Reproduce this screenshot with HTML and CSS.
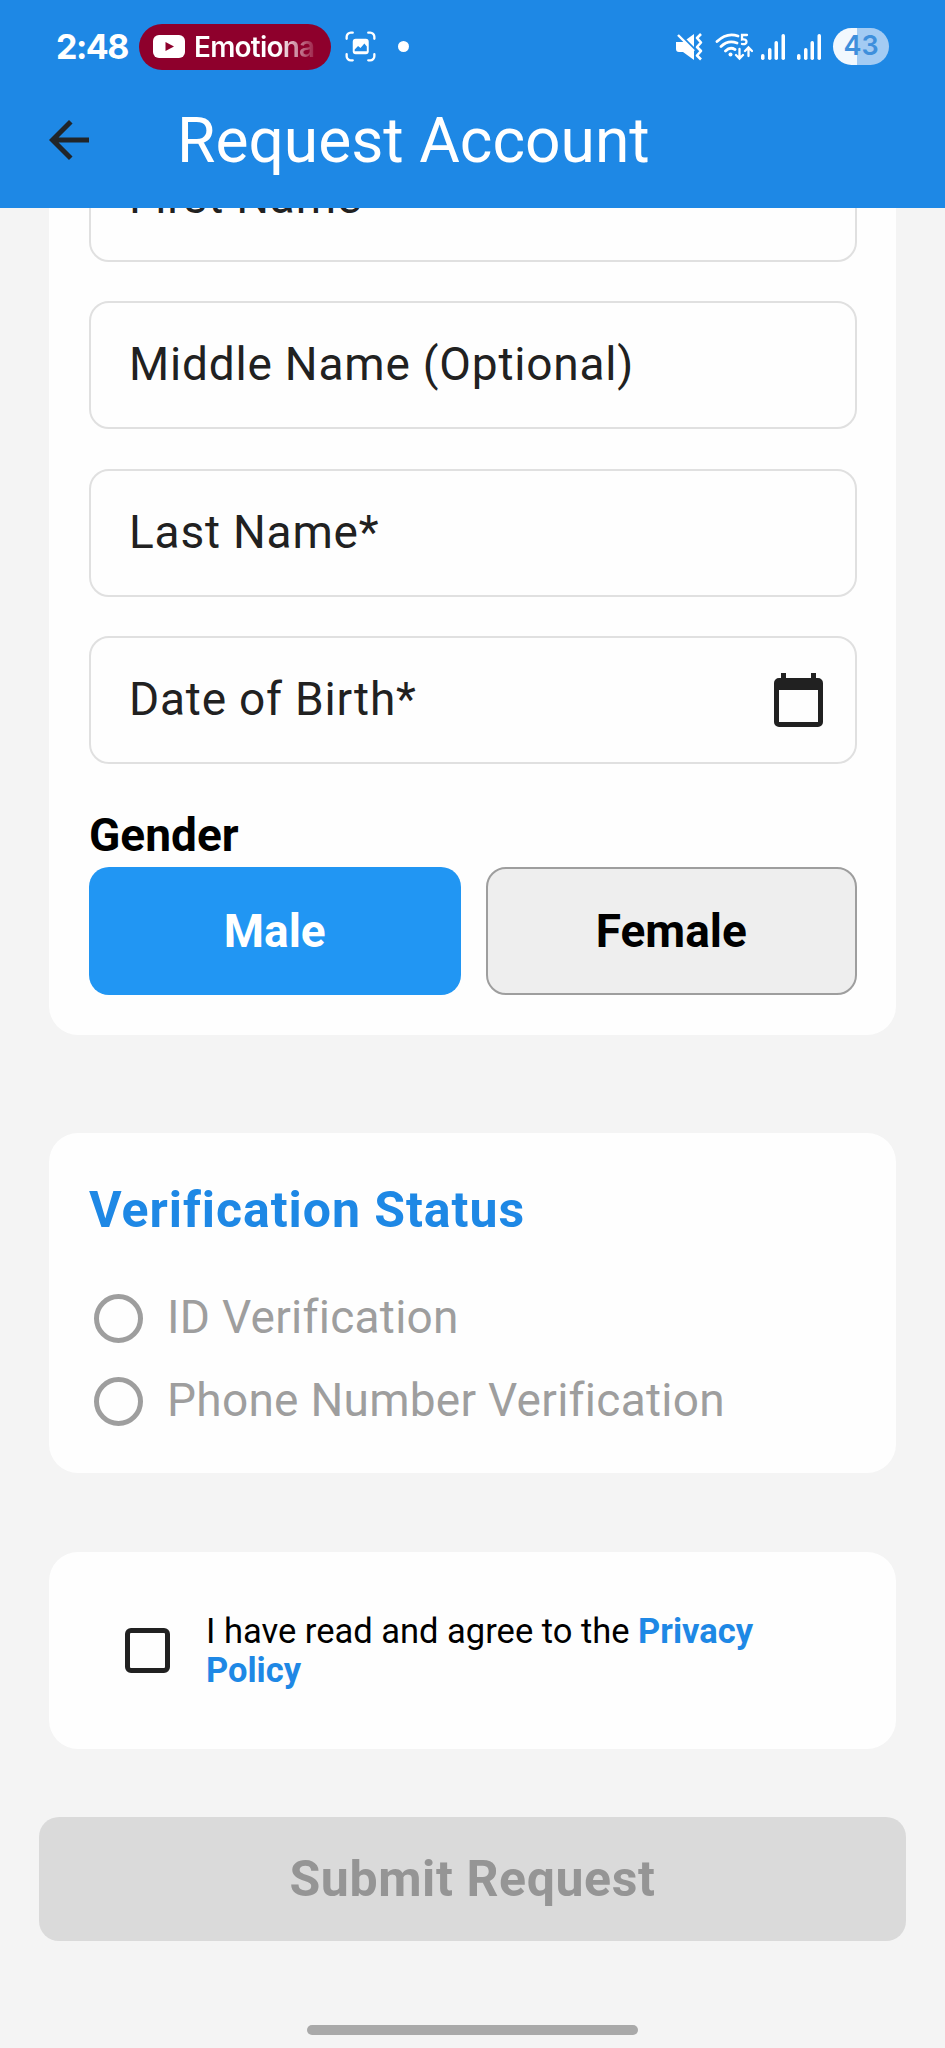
FILE: index.html
```html
<!DOCTYPE html>
<html lang="en">
<head>
<meta charset="utf-8">
<title>Request Account</title>
<link rel="stylesheet" href="styles.css">
</head>
<body>
<div class="screen">
  <header class="header">
    <div class="status">
      <span class="clock">2:48</span>
      <span class="pill">
        <svg class="play" viewBox="0 0 32 23"><rect width="32" height="23" rx="6" fill="#fff"/><path d="M12.500 7v9l8.500-4.500z" fill="#8e002c"/></svg>
        <span class="pill-text">Emotiona</span>
      </span>
      <svg class="shot" viewBox="0 0 32 32" fill="none" stroke="#fff" stroke-width="2.400" stroke-linecap="round"><path d="M1.700 8V6a4.300 4.300 0 0 1 4.300-4.300h2M24 1.700h2A4.300 4.300 0 0 1 30.300 6v2M30.300 24v2a4.300 4.300 0 0 1-4.300 4.300h-2M8 30.300H6A4.300 4.300 0 0 1 1.700 26v-2"/><rect x="8" y="8" width="16.500" height="16" rx="3" fill="#fff" stroke="none"/><path d="M10 21v-2l3.500-3.500 2.500 2 4-4.500 2.500 3v5z" fill="#1e88e5" stroke="none"/></svg>
      <span class="dot"></span>
      <span class="spacer"></span>
      <svg class="mute" viewBox="0 0 28 28"><path d="M1 9h7l11-8v26L8 19H4a3 3 0 0 1-3-3z" fill="#fff"/><path d="M2 -1L21 18" stroke="#1e88e5" stroke-width="3"/><path d="M3 2L19 18" stroke="#fff" stroke-width="2.400"/><path d="M26 1l-4 4 4 4.500-4 4.500 4 4-4 4.500 4 4" fill="none" stroke="#fff" stroke-width="2.600" stroke-linejoin="round"/></svg>
      <svg class="wifi" viewBox="0 0 38 28" fill="none" stroke="#fff" stroke-width="2.800" stroke-linecap="round"><path d="M2 8.500Q12 -1 23 3M6 13.500Q13 6.500 22 10M10.500 18Q15 13.500 20 16.500"/><circle cx="15.500" cy="21.500" r="2" fill="#fff" stroke="none"/><path d="M32 2h-5v4.500c6-1.500 6 6 0 4.500M24.500 16v9M21 22l3.500 3.500L28 22M33.500 23v-8M30 18l3.500-3.500L37 18" stroke-width="2.300"/></svg>
      <svg class="bars" viewBox="0 0 24 26" fill="#fff"><rect y="20" width="3.500" height="6" rx="1.700"/><rect x="7" y="14" width="3.500" height="12" rx="1.700"/><rect x="13.500" y="7" width="3.500" height="19" rx="1.700"/><rect x="20.500" width="3.500" height="26" rx="1.700"/></svg>
      <svg class="bars" viewBox="0 0 24 26" fill="#fff"><rect y="20" width="3.500" height="6" rx="1.700"/><rect x="7" y="14" width="3.500" height="12" rx="1.700"/><rect x="13.500" y="7" width="3.500" height="19" rx="1.700"/><rect x="20.500" width="3.500" height="26" rx="1.700"/></svg>
      <span class="battery">43</span>
    </div>
    <div class="appbar">
      <svg class="back" viewBox="4 4 16 16" fill="#212529"><path d="M20 11H7.830l5.590-5.590L12 4l-8 8 8 8 1.410-1.410L7.830 13H20v-2z"/></svg>
      <h1 class="title">Request Account</h1>
    </div>
  </header>
  <main class="content">
    <section class="card personal">
      <div class="field first"><span>First Name*</span></div>
      <div class="field"><span>Middle Name (Optional)</span></div>
      <div class="field"><span>Last Name*</span></div>
      <div class="field"><span>Date of Birth*</span>
        <svg class="calendar" viewBox="0 0 49 54" fill="#212121"><path fill-rule="evenodd" d="M7 0h5v5h25V0h5v5h2a5 5 0 0 1 5 5v39a5 5 0 0 1-5 5H5a5 5 0 0 1-5-5V10a5 5 0 0 1 5-5h2zM5 17v32h39V17z"/></svg>
      </div>
      <div class="gender-label">Gender</div>
      <div class="genders"><button class="gender male">Male</button><button class="gender female">Female</button></div>
    </section>
    <section class="card verification">
      <h2 class="heading">Verification Status</h2>
      <div class="option"><i class="radio"></i><span>ID Verification</span></div>
      <div class="option"><i class="radio"></i><span>Phone Number Verification</span></div>
    </section>
    <section class="card consent">
      <i class="checkbox"></i>
      <p class="terms">I have read and agree to the <b>Privacy<br>Policy</b></p>
    </section>
    <button class="submit">Submit Request</button>
  </main>
  <div class="handle"></div>
</div>
</body>
</html>
```
FILE: styles.css
```css
* { box-sizing: border-box; }
body { margin: 0; background: #f4f4f4; font-family: Roboto, sans-serif; }
button { font-family: inherit; border: 0; padding: 0; }
svg { display: block; flex: none; }
.screen { width: 945px; height: 2048px; overflow: hidden; display: flex; flex-direction: column; background: #f4f4f4; }
.header { height: 208px; flex: none; background: #1e88e5; color: #fff; position: relative; z-index: 1; }
.status { height: 93px; padding: 0 56px 0 56px; display: flex; align-items: center; }
.clock { font: 700 34px/40px Inter, sans-serif; width: 83px; letter-spacing: -1.500px; white-space: nowrap; }
.pill { width: 192px; height: 46px; border-radius: 23px; background: #8e002c; display: flex; align-items: center; padding-left: 14px; }
.play { width: 32px; height: 23px; }
.pill-text { margin-left: 9px; font: 600 28px/40px Inter, sans-serif; letter-spacing: -0.8px; white-space: nowrap; color: transparent; background: linear-gradient(90deg, #fff 70%, #8e002c 105%); background-clip: text; -webkit-background-clip: text; }
.shot { width: 31px; height: 31px; margin-left: 14px; }
.dot { width: 11px; height: 11px; border-radius: 50%; background: #fff; margin-left: 22px; }
.spacer { flex: 1; }
.mute { width: 28px; height: 28px; margin-right: 12px; }
.wifi { width: 38px; height: 28px; margin-right: 8px; }
.bars { width: 24px; height: 26px; margin-right: 12px; }
.battery { width: 56px; height: 37px; border-radius: 19px; background: linear-gradient(90deg, #f2f8fe 43%, #a3cbf3 43%); color: #3e8fdc; font: 600 27px/36px Inter, sans-serif; text-align: center; }
.appbar { height: 94px; display: flex; align-items: center; padding-left: 49px; }
.back { width: 40px; height: 40px; }
.title { margin: 2px 0 0 88px; font-weight: 400; font-size: 62.300px; line-height: 94px; white-space: nowrap; }
.content { flex: 1; display: flex; flex-direction: column; }
.card { margin: 0 49px; background: #fefefe; border-radius: 29px; flex: none; }
.personal { height: 827px; padding: 0 39px 0 40px; display: flex; flex-direction: column; border-radius: 0 0 29px 29px; }
.field { height: 128px; flex: none; margin-bottom: 39.300px; border: 2px solid #e0e0e0; border-radius: 20px; padding: 0 32px 0 38px; display: flex; justify-content: space-between; align-items: center; font-size: 46px; line-height: 54px; letter-spacing: 0.800px; color: #212121; }
.field span { margin-top: -2px; white-space: nowrap; }
.field.first { margin-top: -74px; }
.calendar { width: 49px; height: 54px; }
.gender-label { height: 64px; font-weight: 700; font-size: 46px; line-height: 64px; color: #000; }
.genders { display: grid; grid-template-columns: 1fr 1fr; gap: 25px; }
.gender { height: 128px; border-radius: 20px; font-weight: 700; font-size: 46px; line-height: 54px; }
.male { background: #2196f3; color: #fff; }
.female { background: #eee; color: #000; border: 2px solid #9e9e9e; }
.verification { margin-top: 98px; height: 340px; padding: 42px 40px 0; }
.heading { margin: 0 0 32px; font-size: 50px; line-height: 70px; font-weight: 700; letter-spacing: 0.950px; color: #1e88e5; white-space: nowrap; }
.option { height: 83px; display: flex; align-items: center; padding-left: 5px; font-size: 46px; letter-spacing: 0.270px; color: #9e9e9e; white-space: nowrap; }
.option span { margin-top: -3px; }
.radio { width: 49px; height: 49px; border: 5px solid #9e9e9e; border-radius: 50%; margin-right: 24px; }
.consent { margin-top: 79px; height: 197px; display: flex; align-items: center; padding-left: 76px; }
.checkbox { width: 45px; height: 45px; border: 5px solid #212121; border-radius: 6px; margin-right: 36px; }
.terms { margin: 0; font-size: 34.500px; line-height: 39px; color: #000; white-space: nowrap; }
.terms b { color: #1e88e5; }
.submit { margin: 68px 39px 0; height: 124px; border-radius: 20px; background: #dadada; color: #959595; font-weight: 700; font-size: 50px; line-height: 60px; letter-spacing: 0.600px; }
.handle { width: 331px; height: 10px; margin: 0 auto 13px; border-radius: 5px; background: #a9a9a9; flex: none; }
```
